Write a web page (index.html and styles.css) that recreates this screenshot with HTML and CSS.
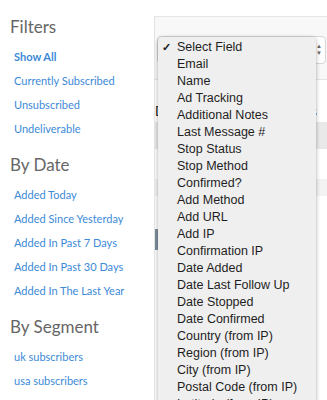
FILE: index.html
```html
<!DOCTYPE html>
<html>
<head>
	<title>Subscribers</title>
	<link rel="stylesheet" href="styles.css">
</head>
<body>
	<div class="page">
		<div class="side">
			<h3>Filters</h3>
			<ul>
				<li><a class="on">Show All</a></li>
				<li><a>Currently Subscribed</a></li>
				<li><a>Unsubscribed</a></li>
				<li><a>Undeliverable</a></li>
			</ul>
			<h3>By Date</h3>
			<ul>
				<li><a>Added Today</a></li>
				<li><a>Added Since Yesterday</a></li>
				<li><a>Added In Past 7 Days</a></li>
				<li><a>Added In Past 30 Days</a></li>
				<li><a>Added In The Last Year</a></li>
			</ul>
			<h3>By Segment</h3>
			<ul>
				<li><a>uk subscribers</a></li>
				<li><a>usa subscribers</a></li>
			</ul>
		</div>
		<div class="main">
			<div class="bar">
				<div class="sel"><span class="arr">&#9650;<br>&#9660;</span></div>
			</div>
			<div class="head"><span>D</span><span>s</span></div>
			<div class="row gray"></div>
			<div class="row"></div>
			<div class="row light"></div>
			<div class="btn"></div>
			<ul class="menu">
				<li class="chk">Select Field</li>
				<li>Email</li>
				<li>Name</li>
				<li>Ad Tracking</li>
				<li>Additional Notes</li>
				<li>Last Message #</li>
				<li>Stop Status</li>
				<li>Stop Method</li>
				<li>Confirmed?</li>
				<li>Add Method</li>
				<li>Add URL</li>
				<li>Add IP</li>
				<li>Confirmation IP</li>
				<li>Date Added</li>
				<li>Date Last Follow Up</li>
				<li>Date Stopped</li>
				<li>Date Confirmed</li>
				<li>Country (from IP)</li>
				<li>Region (from IP)</li>
				<li>City (from IP)</li>
				<li>Postal Code (from IP)</li>
				<li>Latitude (from IP)</li>
			</ul>
		</div>
	</div>
</body>
</html>
```
FILE: styles.css
```css
*{
	margin: 0px;
	padding: 0px;
}
ul,li{
	list-style: none;
}
body{
	font-family: Lato, "Open Sans", sans-serif;
	background: #fff;
	overflow: hidden;
	height: 400px;
}
.page{
	display: flex;
	height: 400px;
	overflow: hidden;
}
.side{
	width: 154px;
	flex: none;
	padding-top: 16px;
}
.side h3{
	font-weight: normal;
	font-size: 17px;
	color: #666;
	line-height: 22px;
	padding-left: 10px;
	margin-bottom: 7px;
}
.side ul{
	margin-bottom: 13px;
}
.side li{
	line-height: 24px;
	padding-left: 14px;
	font-size: 11px;
}
.side a{
	color: #3d8ad8;
}
.side a.on{
	font-weight: bold;
}
.main{
	flex: 1;
	margin-top: 16px;
	border-left: 1px solid #e2e2e2;
	border-top: 1px solid #e6e6e6;
	position: relative;
	overflow: hidden;
}
.bar{
	height: 63px;
	background: #f8f8f8;
	border-bottom: 1px solid #e4e4e4;
	padding: 19px 0 0 2px;
	box-sizing: border-box;
}
.sel{
	height: 26px;
	background: #fff;
	border: 1px solid #d6d6d6;
	border-radius: 4px;
	margin-right: 1px;
	position: relative;
}
.arr{
	position: absolute;
	right: 3px;
	top: 5px;
	font-size: 6px;
	line-height: 7px;
	color: #666;
}
.head{
	display: flex;
	justify-content: space-between;
	font-size: 13px;
	color: #222;
	padding: 23px 10px 0 0;
	height: 16px;
}
.row{
	height: 27px;
}
.gray{
	background: #e9e9e9;
	margin-top: 3px;
}
.light{
	background: #f3f3f3;
	height: 17px;
	margin-top: 3px;
}
.btn{
	width: 4px;
	height: 21px;
	background: #7d8f9c;
	border-radius: 0 2px 2px 0;
	margin-top: 33px;
}
.menu{
	position: absolute;
	left: 3px;
	top: 20px;
	width: 158px;
	height: 380px;
	background: #efefef;
	border-radius: 5px;
	box-shadow: 0 1px 4px rgba(0,0,0,0.35);
	padding-top: 2px;
	font-family: "Liberation Sans", Arial, sans-serif;
	font-size: 12.5px;
	color: #1e1e1e;
}
.menu li{
	line-height: 17px;
	padding-left: 19px;
	white-space: nowrap;
}
.menu li.chk{
	position: relative;
}
.menu li.chk:before{
	content: "\2713";
	position: absolute;
	left: 4px;
	font-size: 11px;
	font-weight: bold;
}
```
